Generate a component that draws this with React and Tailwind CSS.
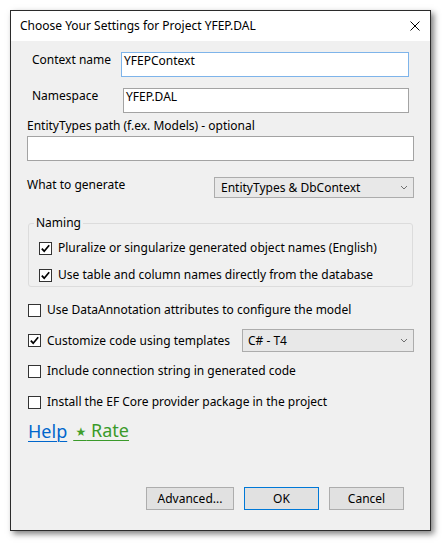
import React from "react";

function Box({ checked }) {
  return (
    <span className="w-[13px] h-[13px] border border-[#333333] bg-white flex items-center justify-center shrink-0">
      {checked && (
        <svg width="11" height="11" viewBox="0 0 11 11">
          <path d="M1.8 5.6 L4.2 8.2 L9.2 2.2" stroke="#000" strokeWidth="1.7" fill="none" />
        </svg>
      )}
    </span>
  );
}

function Chevron() {
  return (
    <svg width="8" height="5" viewBox="0 0 8 5" className="shrink-0">
      <path d="M1 1 L4 4 L7 1" stroke="#6f6f6f" strokeWidth="1" fill="none" />
    </svg>
  );
}

function Btn({ children, primary, w }) {
  return (
    <div
      className={
        "h-[23px] flex items-center justify-center bg-[#e1e1e1] border leading-[16px] shrink-0 " +
        (primary ? "border-[#0078d7] " : "border-[#adadad] ") +
        w
      }
    >
      {children}
    </div>
  );
}

export default function App() {
  return (
    <div className="w-[442px] h-[543px] bg-white pt-[10px] pl-[10px] font-['Noto_Sans',sans-serif] text-[12px] text-black leading-[16px]">
      <div className="w-[421px] h-[521px] border border-[#2b2b2b] flex flex-col shadow-[3px_3px_6px_rgba(0,0,0,0.5)]">
        {/* Title bar */}
        <div className="h-[30px] bg-white flex items-center justify-between pl-[9px] pr-[10px] shrink-0">
          <span>Choose Your Settings for Project YFEP.DAL</span>
          <svg width="10" height="10" viewBox="0 0 10 10">
            <path d="M0.5 0.5 L9.5 9.5 M9.5 0.5 L0.5 9.5" stroke="#000" strokeWidth="1" fill="none" />
          </svg>
        </div>

        {/* Body */}
        <div className="flex-1 bg-[#f0f0f0] flex flex-col pl-[16px] pb-[20px]">
          {/* Context name */}
          <div className="flex items-start mt-[11px]">
            <div className="w-[94px] pl-[5px] shrink-0">Context name</div>
            <div className="w-[288px] h-[25px] shrink-0 bg-white border border-[#7eb4ea] pl-[2px]">YFEPContext</div>
          </div>

          {/* Namespace */}
          <div className="flex items-start mt-[11px]">
            <div className="w-[96px] pl-[5px] shrink-0">Namespace</div>
            <div className="w-[286px] h-[25px] shrink-0 bg-white border border-[#a3a3a3] pl-[2px]">YFEP.DAL</div>
          </div>

          {/* EntityTypes path */}
          <div className="mt-[5px]">EntityTypes path (f.ex. Models) - optional</div>
          <div className="w-[387px] h-[25px] bg-white border border-[#a3a3a3] mt-[2px]"></div>

          {/* What to generate */}
          <div className="flex items-start mt-[16px]">
            <div className="w-[187px] shrink-0">What to generate</div>
            <div className="w-[200px] h-[21px] shrink-0 bg-[#e8e8e8] border border-[#acacac] flex items-center justify-between pl-[6px] pr-[5px]">
              <span>EntityTypes &amp; DbContext</span>
              <Chevron />
            </div>
          </div>

          {/* Naming group */}
          <div className="relative w-[385px] mt-[25px] ml-[1px] border border-[#dcdcdc] rounded-[3px] pl-[10px] pt-[14px] pb-[1px]">
            <span className="absolute -top-[9px] left-[5px] px-[2px] bg-[#f0f0f0]">Naming</span>
            <div className="h-[20px] flex items-center gap-[6px]">
              <Box checked />
              <span>Pluralize or singularize generated object names (English)</span>
            </div>
            <div className="h-[20px] flex items-center gap-[6px] mt-[7px]">
              <Box checked />
              <span>Use table and column names directly from the database</span>
            </div>
          </div>

          {/* DataAnnotation */}
          <div className="h-[20px] flex items-center gap-[6px] mt-[13px] ml-[1px]">
            <Box />
            <span>Use DataAnnotation attributes to configure the model</span>
          </div>

          {/* Customize */}
          <div className="h-[23px] flex items-center mt-[9px] ml-[1px]">
            <div className="w-[214px] shrink-0 flex items-center gap-[6px]">
              <Box checked />
              <span>Customize code using templates</span>
            </div>
            <div className="w-[172px] h-[23px] shrink-0 bg-[#e8e8e8] border border-[#acacac] flex items-center justify-between pl-[5px] pr-[5px]">
              <span>C# - T4</span>
              <Chevron />
            </div>
          </div>

          {/* Include connection string */}
          <div className="h-[20px] flex items-center gap-[6px] mt-[9px] ml-[1px]">
            <Box />
            <span>Include connection string in generated code</span>
          </div>

          {/* Install provider */}
          <div className="h-[20px] flex items-center gap-[6px] mt-[11px] ml-[1px]">
            <Box />
            <span>Install the EF Core provider package in the project</span>
          </div>

          {/* Links */}
          <div className="flex items-center mt-[6px] text-[18px] leading-[24px] gap-[6px] ml-[1px]">
            <span className="text-[#0066cc] underline decoration-1 underline-offset-[3px]">Help</span>
            <span className="text-[#3a9a2a] underline decoration-1 underline-offset-[3px] whitespace-pre">
              <span className="text-[12px] text-[#3f9f2a] font-['DejaVu_Sans',sans-serif] align-[1px]">{"\u2009\u2605"}</span>
              {" Rate"}
            </span>
          </div>

          {/* Buttons */}
          <div className="mt-auto flex justify-end gap-[10px] pr-[26px]">
            <Btn w="w-[88px]">Advanced...</Btn>
            <Btn w="w-[75px]" primary>OK</Btn>
            <Btn w="w-[75px]">Cancel</Btn>
          </div>
        </div>
      </div>
    </div>
  );
}
